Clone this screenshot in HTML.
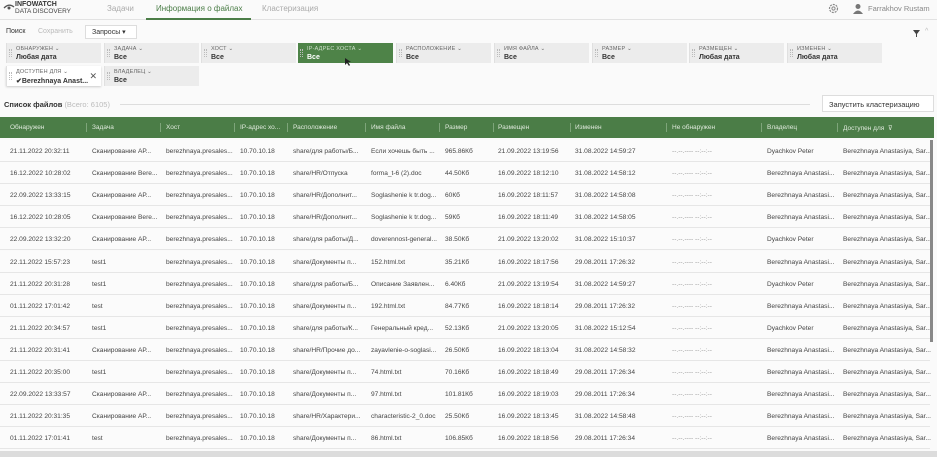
<!DOCTYPE html>
<html><head><meta charset="utf-8"><style>
*{margin:0;padding:0;box-sizing:border-box}
body{width:937px;height:457px;overflow:hidden;background:#fafafa;font-family:"Liberation Sans",sans-serif;font-size:7px;color:#333;position:relative}
.a{position:absolute;white-space:nowrap}
.f{position:absolute;width:95px;height:20px;background:#ececec;border-left:1px solid #e0e0e0}
.f .l{position:absolute;left:9px;top:3px;font-size:5.5px;color:#666;letter-spacing:.2px;white-space:nowrap}
.f .v{position:absolute;left:9px;top:11px;font-size:7px;font-weight:bold;color:#333;white-space:nowrap}
.f .d{position:absolute;left:2px;top:6px;width:3px;height:8px;border-left:1px dotted #bbb;border-right:1px dotted #bbb}
.row{position:absolute;left:0;width:930px;height:22px;border-bottom:1px solid #e6e6e6;background:#fbfbfb}
.row span,.hd span{position:absolute;top:8px;font-size:6.6px;color:#444;white-space:nowrap}
.hd{position:absolute;left:0;top:117px;width:934px;height:21px;background:#4b7d47}
.hd span{top:7px;color:#dfe9dc;font-size:6.5px}
.hd i{position:absolute;top:6px;width:1px;height:9px;background:#7ea57a}
</style></head><body>
<div class="a" style="left:0;top:0;width:937px;height:20px;background:#fafafa;border-bottom:1px solid #e2e2e2"></div>
<svg class="a" style="left:3px;top:2px" width="12" height="10"><path d="M1 6 Q6 1 11 5" stroke="#555" fill="none" stroke-width="1.3"/><circle cx="6" cy="6" r="1.5" fill="#555"/></svg>
<div class="a" style="left:15px;top:1px;font-size:7px;font-weight:bold;color:#333;line-height:7px">INFOWATCH</div>
<div class="a" style="left:15px;top:8px;font-size:6.5px;color:#444">DATA DISCOVERY</div>
<div class="a" style="left:107px;top:4px;font-size:8px;color:#aaa">Задачи</div>
<div class="a" style="left:156px;top:4px;font-size:8px;color:#4b7d47">Информация о файлах</div>
<div class="a" style="left:146px;top:18px;width:105px;height:2px;background:#4b7d47"></div>
<div class="a" style="left:262px;top:4px;font-size:8px;color:#aaa">Кластеризация</div>
<svg class="a" style="left:828px;top:3px" width="11" height="11"><circle cx="5.5" cy="5.5" r="4" stroke="#888" fill="none" stroke-width="1.2" stroke-dasharray="2 1"/><circle cx="5.5" cy="5.5" r="1.6" stroke="#888" fill="none"/></svg>
<svg class="a" style="left:853px;top:3px" width="10" height="11"><circle cx="5" cy="3.5" r="2.5" fill="#777"/><path d="M0 11 Q5 4 10 11Z" fill="#777"/></svg>
<div class="a" style="left:868px;top:4px;font-size:7.5px;color:#888">Farrakhov Rustam</div>

<div class="a" style="left:6px;top:28px;font-size:7px;color:#333">Поиск</div>
<div class="a" style="left:38px;top:28px;font-size:7px;color:#bbb">Сохранить</div>
<div class="a" style="left:85px;top:25px;width:52px;height:14px;background:#fff;border:1px solid #ddd"></div>
<div class="a" style="left:92px;top:28px;font-size:7px;color:#333">Запросы ▾</div>
<svg class="a" style="left:913px;top:30px" width="7" height="7"><path d="M0 0H7L4 4V7H3V4Z" fill="#444"/></svg>
<div class="a" style="left:925px;top:28px;font-size:7px;color:#bbb">^</div>

<div class="f" style="left:6px;top:43px"><i class="d"></i><div class="l">ОБНАРУЖЕН ⌄</div><div class="v">Любая дата</div></div>
<div class="f" style="left:104px;top:43px"><i class="d"></i><div class="l">ЗАДАЧА ⌄</div><div class="v">Все</div></div>
<div class="f" style="left:201px;top:43px"><i class="d"></i><div class="l">ХОСТ ⌄</div><div class="v">Все</div></div>
<div class="f" style="left:298px;top:43px;background:#4e8348;border:none"><i class="d"></i><div class="l" style="color:#cfe0cc">IP-АДРЕС ХОСТА ⌄</div><div class="v" style="color:#fff">Все</div></div>
<div class="f" style="left:396px;top:43px"><i class="d"></i><div class="l">РАСПОЛОЖЕНИЕ ⌄</div><div class="v">Все</div></div>
<div class="f" style="left:494px;top:43px"><i class="d"></i><div class="l">ИМЯ ФАЙЛА ⌄</div><div class="v">Все</div></div>
<div class="f" style="left:592px;top:43px"><i class="d"></i><div class="l">РАЗМЕР ⌄</div><div class="v">Все</div></div>
<div class="f" style="left:689px;top:43px"><i class="d"></i><div class="l">РАЗМЕЩЕН ⌄</div><div class="v">Любая дата</div></div>
<div class="f" style="left:787px;top:43px"><i class="d"></i><div class="l">ИЗМЕНЕН ⌄</div><div class="v">Любая дата</div></div>
<svg class="a" style="left:345px;top:58px" width="6" height="8"><path d="M0 0V7L2 5L4 8L5 7L3 4H6Z" fill="#222"/></svg>
<div class="f" style="left:6px;top:66px;background:#fff;box-shadow:0 1px 2px #ccc"><i class="d"></i><div class="l">ДОСТУПЕН ДЛЯ ⌄</div><div class="v">✔Berezhnaya Anast...</div><div style="position:absolute;right:4px;top:5px;font-size:9px;color:#555">✕</div></div>
<div class="f" style="left:104px;top:66px"><i class="d"></i><div class="l">ВЛАДЕЛЕЦ ⌄</div><div class="v">Все</div></div>

<div class="a" style="left:4px;top:100px;font-size:7.5px;font-weight:bold;color:#333">Список файлов <span style="font-weight:normal;color:#bbb">(Всего: 6105)</span></div>
<div class="a" style="left:120px;top:104px;width:690px;height:1px;background:#ddd"></div>
<div class="a" style="left:822px;top:95px;width:112px;height:17px;background:#fff;border:1px solid #ddd"></div>
<div class="a" style="left:829px;top:100px;font-size:7.5px;color:#333">Запустить кластеризацию</div>

<div class="hd">
<span style="left:10px">Обнаружен</span><i style="left:86px"></i><span style="left:92px">Задача</span><i style="left:160px"></i><span style="left:166px">Хост</span><i style="left:234px"></i><span style="left:240px">IP-адрес хо...</span><i style="left:287px"></i><span style="left:293px">Расположение</span><i style="left:365px"></i><span style="left:371px">Имя файла</span><i style="left:439px"></i><span style="left:445px">Размер</span><i style="left:493px"></i><span style="left:498px">Размещен</span><i style="left:570px"></i><span style="left:575px">Изменен</span><i style="left:666px"></i><span style="left:672px">Не обнаружен</span><i style="left:761px"></i><span style="left:767px">Владелец</span><i style="left:837px"></i><span style="left:843px">Доступен для &nbsp;⊽</span>
</div>
<div id="rows"></div>
<div class="a" style="left:930px;top:140px;width:3px;height:202px;background:#888"></div>
<div class="a" style="left:0;top:451px;width:937px;height:6px;background:#dcdcdc"></div>
<script>
var d=[
["21.11.2022 20:32:11","Сканирование АР...","965.86Кб","Если хочешь быть ...","share/для работы/Б...","21.09.2022 13:19:56","31.08.2022 14:59:27","Dyachkov Peter"],
["16.12.2022 10:28:02","Сканирование Bere...","44.50Кб","forma_t-6 (2).doc","share/HR/Отпуска","16.09.2022 18:12:10","31.08.2022 14:58:12","Berezhnaya Anastasi..."],
["22.09.2022 13:33:15","Сканирование АР...","60Кб","Soglashenie k tr.dog...","share/HR/Дополнит...","16.09.2022 18:11:57","31.08.2022 14:58:08","Berezhnaya Anastasi..."],
["16.12.2022 10:28:05","Сканирование Bere...","59Кб","Soglashenie k tr.dog...","share/HR/Дополнит...","16.09.2022 18:11:49","31.08.2022 14:58:05","Berezhnaya Anastasi..."],
["22.09.2022 13:32:20","Сканирование АР...","38.50Кб","doverennost-general...","share/для работы/Д...","21.09.2022 13:20:02","31.08.2022 15:10:37","Dyachkov Peter"],
["22.11.2022 15:57:23","test1","35.21Кб","152.html.txt","share/Документы п...","16.09.2022 18:17:56","29.08.2011 17:26:32","Berezhnaya Anastasi..."],
["21.11.2022 20:31:28","test1","6.40Кб","Описание Заявлен...","share/для работы/Б...","21.09.2022 13:19:54","31.08.2022 14:59:27","Dyachkov Peter"],
["01.11.2022 17:01:42","test","84.77Кб","192.html.txt","share/Документы п...","16.09.2022 18:18:14","29.08.2011 17:26:32","Berezhnaya Anastasi..."],
["21.11.2022 20:34:57","test1","52.13Кб","Генеральный кред...","share/для работы/К...","21.09.2022 13:20:05","31.08.2022 15:12:54","Dyachkov Peter"],
["21.11.2022 20:31:41","Сканирование АР...","26.50Кб","zayavlenie-o-soglasi...","share/HR/Прочие до...","16.09.2022 18:13:04","31.08.2022 14:58:32","Berezhnaya Anastasi..."],
["21.11.2022 20:35:00","test1","70.16Кб","74.html.txt","share/Документы п...","16.09.2022 18:18:49","29.08.2011 17:26:34","Berezhnaya Anastasi..."],
["22.09.2022 13:33:57","Сканирование АР...","101.81Кб","97.html.txt","share/Документы п...","16.09.2022 18:19:03","29.08.2011 17:26:34","Berezhnaya Anastasi..."],
["21.11.2022 20:31:35","Сканирование АР...","25.50Кб","characteristic-2_0.doc","share/HR/Характери...","16.09.2022 18:13:45","31.08.2022 14:58:48","Berezhnaya Anastasi..."],
["01.11.2022 17:01:41","test","106.85Кб","86.html.txt","share/Документы п...","16.09.2022 18:18:56","29.08.2011 17:26:34","Berezhnaya Anastasi..."]];
var h="";d.forEach(function(r,i){var t=140+i*22.1;
h+='<div class="row" style="top:'+t+'px"><span style="left:10px">'+r[0]+'</span><span style="left:92px">'+r[1]+'</span><span style="left:166px">berezhnaya.presales...</span><span style="left:240px">10.70.10.18</span><span style="left:293px">'+r[4]+'</span><span style="left:371px">'+r[3]+'</span><span style="left:445px">'+r[2]+'</span><span style="left:498px">'+r[5]+'</span><span style="left:575px">'+r[6]+'</span><span style="left:672px;color:#999">--.--.---- --:--:--</span><span style="left:767px">'+r[7]+'</span><span style="left:843px">Berezhnaya Anastasiya, Sar...</span></div>';});
document.getElementById("rows").innerHTML=h;
</script>
</body></html>
